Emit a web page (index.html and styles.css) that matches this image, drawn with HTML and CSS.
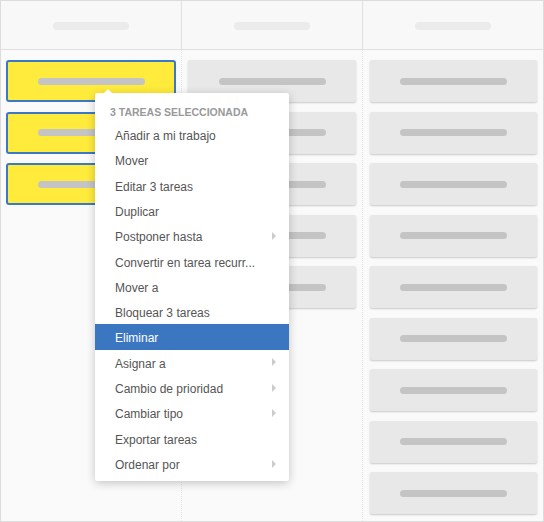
FILE: index.html
```html
<!DOCTYPE html>
<html lang="es">
<head>
<meta charset="utf-8">
<title>Tablero</title>
<link rel="stylesheet" href="styles.css">
</head>
<body>
<div class="board">
  <div class="col c1">
    <div class="col-head"><span class="head-pill"></span></div>
    <div class="col-body">
      <div class="card sel"><span class="pill"></span></div>
      <div class="card sel"><span class="pill"></span></div>
      <div class="card sel"><span class="pill"></span></div>
    </div>
  </div>
  <div class="col c2">
    <div class="col-head"><span class="head-pill"></span></div>
    <div class="col-body">
      <div class="card"><span class="pill"></span></div>
      <div class="card"><span class="pill"></span></div>
      <div class="card"><span class="pill"></span></div>
      <div class="card"><span class="pill"></span></div>
      <div class="card"><span class="pill"></span></div>
    </div>
  </div>
  <div class="col c3 last">
    <div class="col-head"><span class="head-pill"></span></div>
    <div class="col-body">
      <div class="card"><span class="pill"></span></div>
      <div class="card"><span class="pill"></span></div>
      <div class="card"><span class="pill"></span></div>
      <div class="card"><span class="pill"></span></div>
      <div class="card"><span class="pill"></span></div>
      <div class="card"><span class="pill"></span></div>
      <div class="card"><span class="pill"></span></div>
      <div class="card"><span class="pill"></span></div>
      <div class="card"><span class="pill"></span></div>
    </div>
  </div>

  <div class="menu">
    <div class="menu-title">3 TAREAS SELECCIONADA</div>
    <div class="item">Añadir a mi trabajo</div>
    <div class="item">Mover</div>
    <div class="item">Editar 3 tareas</div>
    <div class="item">Duplicar</div>
    <div class="item sub">Postponer hasta</div>
    <div class="item">Convertir en tarea recurr...</div>
    <div class="item">Mover a</div>
    <div class="item">Bloquear 3 tareas</div>
    <div class="item active">Eliminar</div>
    <div class="item sub">Asignar a</div>
    <div class="item sub">Cambio de prioridad</div>
    <div class="item sub">Cambiar tipo</div>
    <div class="item">Exportar tareas</div>
    <div class="item sub">Ordenar por</div>
  </div>
</div>
</body>
</html>
```

FILE: styles.css
```css
* { box-sizing: border-box; }
html, body { margin: 0; padding: 0; }
body {
  font-family: "Liberation Sans", Arial, sans-serif;
  background: #ffffff;
}
.board {
  position: relative;
  width: 544px;
  height: 522px;
  border: 1px solid #dcdcdc;
  display: grid;
  grid-template-columns: 181px 181px 180px;
  background: #fafafa;
  overflow: hidden;
}
.col {
  display: flex;
  flex-direction: column;
  min-height: 0;
}
.col-head {
  height: 49px;
  background: #f8f8f8;
  border-bottom: 1px solid #e0e0e0;
  border-right: 1px solid #e0e0e0;
  display: flex;
  align-items: center;
  justify-content: center;
  padding-top: 1px;
}
.col.last .col-head { border-right: none; }
.head-pill {
  width: 76px;
  height: 8px;
  border-radius: 4px;
  background: #ebebeb;
}
.col-body {
  flex: 1;
  border-right: 1px dotted #e2e2e2;
  padding: 10px 6px 0 6px;
  display: flex;
  flex-direction: column;
  gap: 9.5px;
}
.c1 .col-body { padding-left: 5px; padding-right: 5px; }
.c2 .col-body { padding-left: 6px; padding-right: 6px; }
.c3 .col-body { border-right: none; padding-left: 7px; padding-right: 6px; }
.card {
  height: 42px;
  flex: none;
  background: #e8e8e8;
  border-radius: 2px;
  box-shadow: 0 1px 2px rgba(0,0,0,0.2);
  display: flex;
  align-items: center;
  justify-content: center;
}
.card.sel {
  background: #ffeb3b;
  border: 2px solid #3b78c7;
  border-radius: 3px;
  box-shadow: none;
}
.pill {
  width: 107px;
  height: 7px;
  border-radius: 4px;
  background: #c4c4c4;
}
.menu {
  position: absolute;
  left: 94px;
  top: 92px;
  width: 194px;
  background: #ffffff;
  border-radius: 2px;
  box-shadow: 0 2px 10px rgba(0,0,0,0.22);
  padding: 0 0 5px 0;
}
.menu::before {
  content: "";
  position: absolute;
  left: 9px;
  top: -4px;
  border-left: 4px solid transparent;
  border-right: 4px solid transparent;
  border-bottom: 4px solid #ffffff;
}
.menu-title {
  font-size: 10.5px;
  font-weight: bold;
  color: #999999;
  line-height: 14px;
  padding: 12px 0 3.1px 15px;
}
.item {
  position: relative;
  height: 25.3px;
  line-height: 22.3px;
  padding-top: 3px;
  font-size: 12px;
  color: #555555;
  padding-left: 20px;
  white-space: nowrap;
}
.item.sub::after {
  content: "";
  position: absolute;
  right: 13px;
  top: 50%;
  margin-top: -4px;
  border-top: 4px solid transparent;
  border-bottom: 4px solid transparent;
  border-left: 4px solid #cccccc;
}
.item.active {
  background: #3b76c1;
  color: #ffffff;
}
```
